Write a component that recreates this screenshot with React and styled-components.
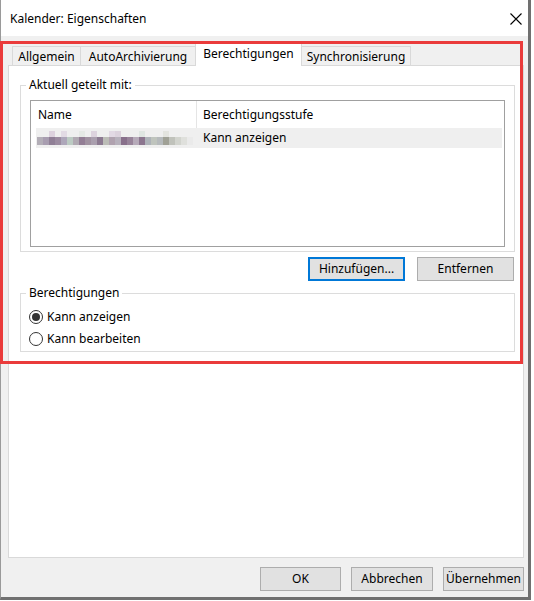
import React from "react";
import styled, { createGlobalStyle } from "styled-components";

const GlobalStyle = createGlobalStyle`
  html, body { margin: 0; padding: 0; background: #ffffff; }
  body { font-family: "Noto Sans", "Open Sans", sans-serif; font-size: 12px; color: #000; }
  * { box-sizing: border-box; }
`;

const Window = styled.div`
  position: relative;
  width: 531px;
  height: 600px;
  display: flex;
  flex-direction: column;
  border-left: 1px solid #9a9a9a;
  border-right: 3px solid #707070;
  border-bottom: 3px solid #707070;
  background: #f0f0f0;
`;

const TitleBar = styled.div`
  height: 36px;
  flex: none;
  background: #ffffff;
  display: flex;
  align-items: center;
  justify-content: space-between;
  padding: 2px 6px 0 9px;
`;

const Title = styled.span`
  font-size: 12px;
  line-height: 16px;
`;

const CloseBtn = styled.div`
  width: 12px;
  height: 12px;
  display: flex;
`;

const Body = styled.div`
  flex: 1;
  display: flex;
  flex-direction: column;
  padding: 7px 4px 0 7px;
`;

const TabStrip = styled.div`
  height: 22px;
  display: flex;
  align-items: flex-end;
  padding-left: 4px;
`;

const Tab = styled.div`
  position: relative;
  width: ${(p) => p.$w}px;
  height: ${(p) => (p.$active ? 23 : 19)}px;
  margin-left: ${(p) => (p.$first ? 0 : -1)}px;
  margin-bottom: ${(p) => (p.$active ? -1 : 0)}px;
  z-index: ${(p) => (p.$active ? 2 : 1)};
  background: ${(p) => (p.$active ? "#ffffff" : "#f0f0f0")};
  border: 1px solid #d9d9d9;
  border-bottom: none;
  display: flex;
  align-items: center;
  justify-content: center;
  padding-bottom: ${(p) => (p.$active ? 3 : 0)}px;
  padding-top: ${(p) => (p.$active ? 0 : 1)}px;
  font-size: 12px;
  line-height: 16px;
  white-space: nowrap;
`;

const Panel = styled.div`
  height: 493px;
  flex: none;
  background: #ffffff;
  border: 1px solid #d9d9d9;
  padding: 11px 8px 0 11px;
  display: flex;
  flex-direction: column;
`;

const Group = styled.fieldset`
  margin: 0;
  min-width: 0;
  border: 1px solid #dcdcdc;
  padding: ${(p) => p.$pad};
`;

const Legend = styled.legend`
  font-size: 12px;
  line-height: 16px;
  padding: 0 3px;
  margin-left: -4px;
`;

const List = styled.div`
  height: 147px;
  border: 1px solid #a0a0a0;
  background: #ffffff;
  display: flex;
  flex-direction: column;
`;

const HeaderRow = styled.div`
  height: 27px;
  display: grid;
  grid-template-columns: 166px 1fr;
`;

const HeaderCell = styled.div`
  display: flex;
  align-items: center;
  padding-left: ${(p) => p.$pl}px;
  border-right: ${(p) => (p.$divider ? "1px solid #e5e5e5" : "none")};
  line-height: 16px;
`;

const ItemRow = styled.div`
  height: 20px;
  margin: 0 2px 0 5px;
  background: #efefef;
  display: grid;
  grid-template-columns: 160px 1fr;
  align-items: center;
`;

const ItemCell = styled.div`
  display: flex;
  align-items: center;
  padding-left: ${(p) => p.$pl}px;
  line-height: 16px;
`;

const ButtonRow = styled.div`
  display: flex;
  justify-content: flex-end;
  gap: ${(p) => p.$gap}px;
  margin: ${(p) => p.$m};
`;

const Button = styled.button`
  width: ${(p) => p.$w}px;
  height: 24px;
  padding: 0;
  background: #e1e1e1;
  border: 1px solid ${(p) => (p.$focus ? "#0078d7" : "#adadad")};
  box-shadow: ${(p) => (p.$focus ? "inset 0 0 0 1px #0078d7" : "none")};
  font-family: inherit;
  font-size: 12px;
  line-height: 16px;
  color: #000;
`;

const RadioRow = styled.label`
  height: 22px;
  display: flex;
  align-items: center;
  gap: 4px;
  margin-left: -1px;
  line-height: 16px;
`;

const RadioCircle = styled.span`
  width: 14px;
  height: 14px;
  border-radius: 50%;
  border: 1px solid #333333;
  background: #ffffff;
  display: flex;
  align-items: center;
  justify-content: center;
  &::after {
    content: "";
    width: 8px;
    height: 8px;
    border-radius: 50%;
    background: ${(p) => (p.$checked ? "#333333" : "transparent")};
  }
`;

const Footer = styled.div`
  display: flex;
  justify-content: flex-end;
  gap: 10px;
  padding: 9px 0 6px;
`;

const Highlight = styled.div`
  position: absolute;
  left: -1px;
  top: 41px;
  width: 523px;
  height: 323px;
  border: 3px solid #ea3b3b;
  pointer-events: none;
  z-index: 10;
`;

const topBlocks = [
  "#efefef","#efefef","#ddd2de","#efefef","#e2dbe4","#efefef","#efefef","#e5e9e5",
  "#efefef","#ddd3de","#efefef","#efefef","#e2d9e4","#dcd2dd","#efefef","#efefef",
  "#efefef","#dfe6e2","#efefef","#efefef","#efefef","#e3e4df","#efefef","#efefef",
  "#efefef","#efefef",
];
const bottomBlocks = [
  "#b3aeb7","#a89db0","#907f96","#9c8ca1","#aea7ba","#bccbc3","#b1aab3","#937e95",
  "#a192a1","#aa9fae","#8c7a91","#bcbdb7","#b0a2af","#b7b1bc","#88708b","#98849a",
  "#b6aab9","#8c768f","#aeb3b9","#bfc4bd","#b6babc","#a0a196","#c0c2bb","#d2d4ce",
  "#dfe0dc","#eaeaea",
];

function Mosaic() {
  return (
    <svg width="158" height="15" viewBox="0 0 158 15" style={{ display: "block" }}>
      {topBlocks.map((c, i) => (
        <rect key={"t" + i} x={i * 6} y={0} width={6} height={6} fill={c} />
      ))}
      {bottomBlocks.map((c, i) => (
        <rect key={"b" + i} x={i * 6} y={6} width={6} height={8} fill={c} />
      ))}
    </svg>
  );
}

function CloseIcon() {
  return (
    <svg width="12" height="12" viewBox="0 0 12 12">
      <path d="M0.5 0.5 L11.5 11.5 M11.5 0.5 L0.5 11.5" stroke="#000" strokeWidth="1.1" fill="none" />
    </svg>
  );
}

export default function App() {
  return (
    <>
      <GlobalStyle />
      <Window>
        <TitleBar>
          <Title>Kalender: Eigenschaften</Title>
          <CloseBtn>
            <CloseIcon />
          </CloseBtn>
        </TitleBar>
        <Body>
          <TabStrip>
            <Tab $first $w={69}>Allgemein</Tab>
            <Tab $w={116}>AutoArchivierung</Tab>
            <Tab $active $w={107}>Berechtigungen</Tab>
            <Tab $w={110}>Synchronisierung</Tab>
          </TabStrip>
          <Panel>
            <Group $pad="7px 9px 4px 9px">
              <Legend>Aktuell geteilt mit:</Legend>
              <List>
                <HeaderRow>
                  <HeaderCell $pl={7} $divider>Name</HeaderCell>
                  <HeaderCell $pl={6}>Berechtigungsstufe</HeaderCell>
                </HeaderRow>
                <ItemRow>
                  <ItemCell $pl={1}>
                    <Mosaic />
                  </ItemCell>
                  <ItemCell $pl={7}>Kann anzeigen</ItemCell>
                </ItemRow>
              </List>
            </Group>
            <ButtonRow $gap={12} $m="5px 1px 4px 0">
              <Button $w={97} $focus>Hinzufügen...</Button>
              <Button $w={97}>Entfernen</Button>
            </ButtonRow>
            <Group $pad="5px 9px 1px 9px">
              <Legend>Berechtigungen</Legend>
              <RadioRow>
                <RadioCircle $checked />
                Kann anzeigen
              </RadioRow>
              <RadioRow>
                <RadioCircle />
                Kann bearbeiten
              </RadioRow>
            </Group>
          </Panel>
          <Footer>
            <Button $w={81}>OK</Button>
            <Button $w={82}>Abbrechen</Button>
            <Button $w={81}>Übernehmen</Button>
          </Footer>
        </Body>
        <Highlight />
      </Window>
    </>
  );
}
